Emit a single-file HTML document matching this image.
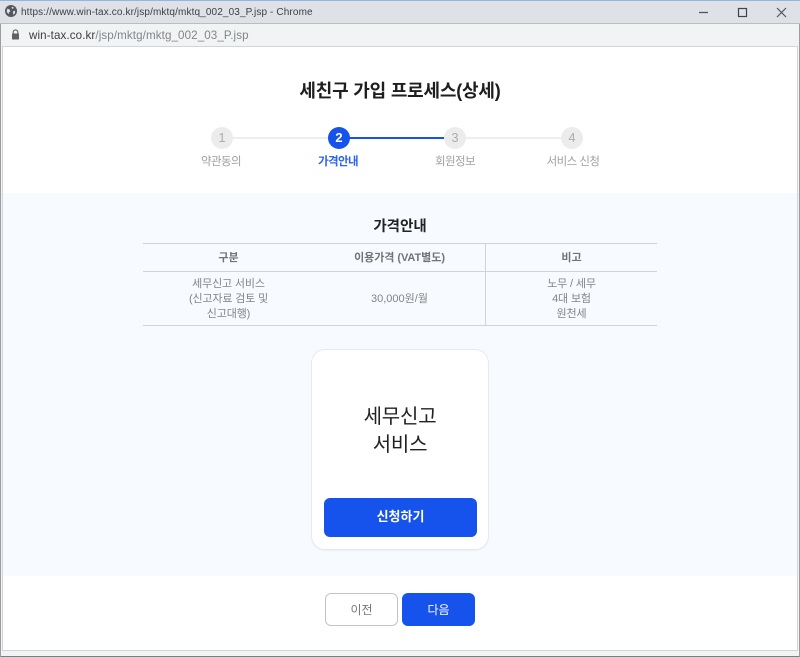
<!DOCTYPE html>
<html lang="ko"><head><meta charset="utf-8"><style>
*{box-sizing:border-box;margin:0;padding:0}
html,body{width:800px;height:657px;overflow:hidden;background:#f1f3f4;font-family:"Liberation Sans","Noto Sans CJK KR",sans-serif}
.a{position:absolute;white-space:nowrap}
.c{text-align:center}
#top{left:0;top:0;width:800px;height:23px;background:#dee1e6;border-top:1px solid #8fb8dc}
#addr{left:0;top:23px;width:800px;height:23px;background:#f1f3f4;border-top:1px solid #b9bcc0}
#page{left:2px;top:46px;width:796px;height:605px;background:#fff;border:1px solid #d2d4d6}
#blue{left:3px;top:193px;width:794px;height:383px;background:#f7faff}
.circ{width:22px;height:22px;border-radius:50%;background:#ececec;color:#adadad;font-size:13px;line-height:22px;text-align:center;top:127px}
.lab{font-size:11.5px;line-height:16px;color:#a0a0a0;top:154px;width:100px;text-align:center;letter-spacing:-.55px}
.hl{height:2px;top:137px}
.line{background:#d0d4da}
.th{font-size:11px;font-weight:700;color:#737373;line-height:16px}
.td{font-size:11px;color:#848484;line-height:15px;letter-spacing:-.15px}
</style></head><body>
<div class="a" id="top"></div>
<svg class="a" style="left:5px;top:5px" width="12" height="12" viewBox="0 0 12 12"><circle cx="6" cy="6" r="6" fill="#54585c"/><path d="M2.4 3.6 4.8 4.6 5.2 6.6 4 7.2 3.6 9.2 1.6 6.6ZM7 1.6 8.8 2.6 7.8 4 6.6 3ZM8 6.2 10.2 5.8 9.8 8.6 8.2 9.8Z" fill="#dee1e6"/></svg>
<div class="a" style="left:21px;top:6px;font-size:10px;line-height:14px;color:#3c4043;letter-spacing:.12px">https://www.win-tax.co.kr/jsp/mktq/mktq_002_03_P.jsp - Chrome</div>
<svg class="a" style="left:695px;top:6px" width="100" height="14" viewBox="0 0 100 14"><path d="M4 6.5H13" stroke="#50545a" stroke-width="1.3"/><rect x="43.5" y="2.5" width="8" height="8" fill="none" stroke="#404347" stroke-width="1.2"/><path d="M82 2 91 11M91 2 82 11" stroke="#50545a" stroke-width="1.2"/></svg>
<div class="a" id="addr"></div>
<svg class="a" style="left:11px;top:29px" width="9" height="11" viewBox="0 0 9 11"><path d="M2.2 5V3.2a2.3 2.3 0 0 1 4.6 0V5" fill="none" stroke="#5f6368" stroke-width="1.1"/><rect x="1" y="4.5" width="7" height="6" rx=".6" fill="#5f6368"/></svg>
<div class="a" style="left:29px;top:28px;font-size:11.6px;line-height:15px;color:#3c4043;letter-spacing:.1px">win-tax.co.kr<span style="color:#80868b">/jsp/mktg/mktg_002_03_P.jsp</span></div>
<div class="a" id="page"></div>
<div class="a" id="blue"></div>
<div class="a c" style="left:200px;width:400px;top:78px;font-size:18px;line-height:26px;font-weight:700;color:#1e1e1e;letter-spacing:-.2px">세친구 가입 프로세스(상세)</div>
<div class="a hl" style="left:232px;width:107px;background:#eee"></div>
<div class="a hl" style="left:339px;width:116px;background:#1553ec"></div>
<div class="a hl" style="left:455px;width:116px;background:#eee"></div>
<div class="a circ" style="left:211px">1</div>
<div class="a circ" style="left:328px;background:#1553ec;color:#fff;font-weight:700">2</div>
<div class="a circ" style="left:444px">3</div>
<div class="a circ" style="left:561px">4</div>
<div class="a lab" style="left:171px">약관동의</div>
<div class="a lab" style="left:288px;color:#2b62ef;font-weight:700">가격안내</div>
<div class="a lab" style="left:405px">회원정보</div>
<div class="a lab" style="left:523px">서비스 신청</div>
<div class="a c" style="left:300px;width:200px;top:217px;font-size:14.5px;line-height:20px;font-weight:700;color:#222">가격안내</div>
<div class="a line" style="left:143px;top:243px;width:514px;height:1px"></div>
<div class="a line" style="left:143px;top:271px;width:514px;height:1px"></div>
<div class="a line" style="left:143px;top:325px;width:514px;height:1px"></div>
<div class="a line" style="left:485px;top:243px;width:1px;height:82px"></div>
<div class="a th c" style="left:143px;width:171px;top:250px">구분</div>
<div class="a th c" style="left:314px;width:171px;top:250px;letter-spacing:-.05px">이용가격 (VAT별도)</div>
<div class="a th c" style="left:486px;width:171px;top:250px">비고</div>
<div class="a td c" style="left:143px;width:171px;top:277px">세무신고 서비스<br>(신고자료 검토 및<br>신고대행)</div>
<div class="a td c" style="left:314px;width:171px;top:292px;letter-spacing:0">30,000원/월</div>
<div class="a td c" style="left:486px;width:171px;top:277px">노무 / 세무<br>4대 보험<br>원천세</div>
<div class="a" style="left:311px;top:349px;width:178px;height:201px;background:#fff;border:1px solid #e8eaed;border-radius:14px;box-shadow:0 1px 1px rgba(0,0,0,.05)"></div>
<div class="a c" style="left:311px;width:178px;top:403px;font-size:20px;line-height:28px;color:#222;letter-spacing:-.2px">세무신고<br>서비스</div>
<div class="a c" style="left:324px;top:498px;width:153px;height:39px;background:#1553ec;border-radius:6px;color:#fff;font-size:13px;font-weight:700;line-height:37px">신청하기</div>
<div class="a c" style="left:325px;top:593px;width:73px;height:33px;background:#fff;border:1px solid #c4c4c4;border-radius:6px;color:#777;font-size:12px;line-height:33px">이전</div>
<div class="a c" style="left:402px;top:593px;width:73px;height:33px;background:#1553ec;border-radius:6px;color:#fff;font-size:12px;line-height:35px">다음</div>
<div class="a" style="left:0;top:656px;width:800px;height:1px;background:#7b7d80"></div>
<div class="a" style="left:0;top:24px;width:1px;height:633px;background:#9a9c9f"></div>
<div class="a" style="left:799px;top:24px;width:1px;height:633px;background:#9a9c9f"></div>
</body></html>
